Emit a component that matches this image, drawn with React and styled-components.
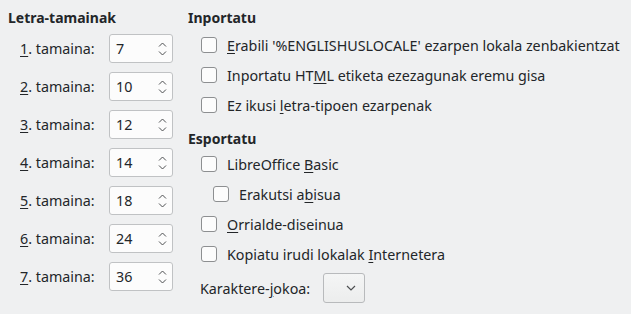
import React from "react";
import styled, { createGlobalStyle } from "styled-components";

const Global = createGlobalStyle`
  html, body { margin: 0; padding: 0; background: #eff0f1; }
  body { font-family: "Noto Sans", "DejaVu Sans", sans-serif; font-size: 14.3px; color: #232629; }
`;

const Page = styled.div`
  display: flex;
  width: 631px;
  height: 314px;
  box-sizing: border-box;
  padding: 8px 0 0 8px;
`;

const LeftCol = styled.div`
  width: 180px;
  display: flex;
  flex-direction: column;
`;

const RightCol = styled.div`
  display: flex;
  flex-direction: column;
`;

const Heading = styled.div`
  font-weight: bold;
  font-size: 14px;
  height: 20px;
  line-height: 20px;
  margin-top: ${(p) => p.$mt || 0}px;
`;

const SizeList = styled.div`
  display: flex;
  flex-direction: column;
  gap: 9px;
  margin-top: 6px;
`;

const SizeRow = styled.div`
  display: flex;
  align-items: center;
  height: 29px;
  padding-left: 12px;
`;

const SizeLabel = styled.span`
  width: 89px;
`;

const U = styled.span`
  text-decoration: underline;
  text-underline-offset: 2px;
`;

const Spin = styled.div`
  width: 64px;
  height: 29px;
  box-sizing: border-box;
  border: 1px solid #c0c2c4;
  border-radius: 3px;
  background: #fcfcfc;
  display: flex;
  align-items: center;
  justify-content: space-between;
  padding: 0 5px 0 6px;
`;

const Arrows = styled.svg`
  display: block;
`;

const CheckRow = styled.div`
  display: flex;
  align-items: center;
  height: 30px;
  padding-left: ${(p) => p.$indent || 13}px;
  margin-top: ${(p) => p.$mt || 0}px;
  gap: 10px;
`;

const Box = styled.span`
  width: 16px;
  height: 16px;
  box-sizing: border-box;
  border: 1px solid #8d8f91;
  border-radius: 3px;
  background: #fcfcfc;
  flex: none;
`;

const ComboRow = styled.div`
  display: flex;
  align-items: center;
  height: 30px;
  margin-top: 4px;
  padding-left: 12px;
  gap: 13px;
`;

const Combo = styled.div`
  width: 42px;
  height: 30px;
  box-sizing: border-box;
  border: 1px solid #b8babc;
  border-radius: 3px;
  background: linear-gradient(#f4f5f5, #eceded);
  display: flex;
  align-items: center;
  justify-content: flex-end;
  padding-right: 8px;
`;

const sizes = ["7", "10", "12", "14", "18", "24", "36"];

function Check({ children, indent, mt }) {
  return (
    <CheckRow $indent={indent} $mt={mt}>
      <Box />
      <span>{children}</span>
    </CheckRow>
  );
}

export default function App() {
  return (
    <>
      <Global />
      <Page>
        <LeftCol>
          <Heading>Letra-tamainak</Heading>
          <SizeList>
            {sizes.map((s, i) => (
              <SizeRow key={i}>
                <SizeLabel>
                  <U>{i + 1}</U>. tamaina:
                </SizeLabel>
                <Spin>
                  <span>{s}</span>
                  <Arrows width="9" height="16" viewBox="0 0 9 16">
                    <path d="M1 5.5 L4.5 2 L8 5.5" fill="none" stroke="#4d4f51" strokeWidth="1" />
                    <path d="M1 10.5 L4.5 14 L8 10.5" fill="none" stroke="#4d4f51" strokeWidth="1" />
                  </Arrows>
                </Spin>
              </SizeRow>
            ))}
          </SizeList>
        </LeftCol>
        <RightCol>
          <Heading>Inportatu</Heading>
          <Check mt={2}>
            <U>E</U>rabili '%ENGLISHUSLOCALE' ezarpen lokala zenbakientzat
          </Check>
          <Check>Inportatu HT<U>M</U>L etiketa ezezagunak eremu gisa</Check>
          <Check>Ez ikusi <U>l</U>etra-tipoen ezarpenak</Check>
          <Heading $mt={9}>Esportatu</Heading>
          <Check>LibreOffice <U>B</U>asic</Check>
          <Check indent={25}>Erakutsi a<U>b</U>isua</Check>
          <Check><U>O</U>rrialde-diseinua</Check>
          <Check>Kopiatu irudi lokalak <U>I</U>nternetera</Check>
          <ComboRow>
            <span>Karaktere-<U>j</U>okoa:</span>
            <Combo>
              <svg width="10" height="6" viewBox="0 0 10 6">
                <path d="M1 1 L5 5 L9 1" fill="none" stroke="#4d4f51" strokeWidth="1.2" />
              </svg>
            </Combo>
          </ComboRow>
        </RightCol>
      </Page>
    </>
  );
}
